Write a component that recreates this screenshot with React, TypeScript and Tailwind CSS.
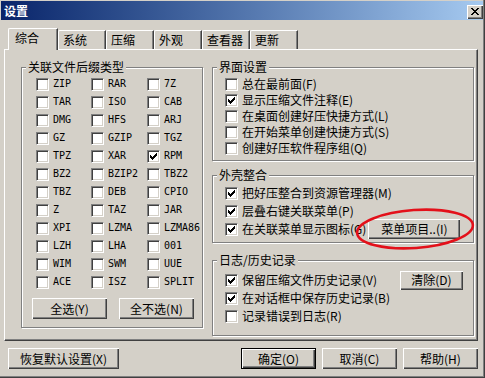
import React from "react";

const FONT = '"Noto Sans CJK SC", "Noto Sans", sans-serif';
const MONO = '"DejaVu Sans Mono", "Liberation Mono", monospace';

const CHECK: [number, number][] = [
  [6, 0], [5, 1], [6, 1], [0, 2], [4, 2], [5, 2], [6, 2], [0, 3], [1, 3], [3, 3], [4, 3], [5, 3],
  [0, 4], [1, 4], [2, 4], [3, 4], [4, 4], [1, 5], [2, 5], [3, 5], [2, 6],
];

const XMARK: [number, number][] = [];
[
  "XX....XX",
  ".XX..XX.",
  "..XXXX..",
  "...XX...",
  "..XXXX..",
  ".XX..XX.",
  "XX....XX",
].forEach((row, y) => row.split("").forEach((c, x) => c === "X" && XMARK.push([x, y])));

function Pixels({ px, w, h, className }: { px: [number, number][]; w: number; h: number; className?: string }) {
  return (
    <svg width={w} height={h} viewBox={`0 0 ${w} ${h}`} shapeRendering="crispEdges" className={className}>
      {px.map(([x, y]) => (
        <rect key={`${x}-${y}`} x={x} y={y} width="1" height="1" fill="#000" />
      ))}
    </svg>
  );
}

function Box({ checked }: { checked?: boolean }) {
  return (
    <span className="relative block w-[13px] h-[13px] shrink-0 bg-white border border-t-[#808080] border-l-[#808080] border-r-white border-b-white shadow-[inset_1px_1px_0_#404040,inset_-1px_-1px_0_#d4d0c8]">
      {checked && <Pixels px={CHECK} w={7} h={7} className="absolute left-[2px] top-[2px]" />}
    </span>
  );
}

function Btn({ children, className = "", def }: { children: React.ReactNode; className?: string; def?: boolean }) {
  return (
    <div
      className={`flex items-center justify-center shrink-0 bg-[#d4d0c8] text-[12px] leading-[14px] text-black whitespace-nowrap ${
        def
          ? "border border-black shadow-[inset_1px_1px_0_#fff,inset_-1px_-1px_0_#404040,inset_-2px_-2px_0_#808080]"
          : "shadow-[inset_1px_1px_0_#fff,inset_-1px_-1px_0_#404040,inset_-2px_-2px_0_#808080]"
      } ${className}`}
    >
      {children}
    </div>
  );
}

function Group({ title, className = "", children }: { title: string; className?: string; children: React.ReactNode }) {
  return (
    <div className={`relative shrink-0 border border-[#808080] shadow-[1px_1px_0_#fff,inset_1px_1px_0_#fff] ${className}`}>
      <span className="absolute left-[4px] -top-[8px] bg-[#d4d0c8] px-[2px] leading-[14px] text-[12px] whitespace-nowrap">
        {title}
      </span>
      {children}
    </div>
  );
}

function Row({ label, checked, className = "" }: { label: string; checked?: boolean; className?: string }) {
  return (
    <div className={`flex items-center gap-[4px] ${className}`}>
      <Box checked={checked} />
      <span className="text-[12px] leading-[14px] whitespace-nowrap">{label}</span>
    </div>
  );
}

const TYPES = [
  "ZIP", "RAR", "7Z",
  "TAR", "ISO", "CAB",
  "DMG", "HFS", "ARJ",
  "GZ", "GZIP", "TGZ",
  "TPZ", "XAR", "RPM",
  "BZ2", "BZIP2", "TBZ2",
  "TBZ", "DEB", "CPIO",
  "Z", "TAZ", "JAR",
  "XPI", "LZMA", "LZMA86",
  "LZH", "LHA", "001",
  "WIM", "SWM", "UUE",
  "ACE", "ISZ", "SPLIT",
];

const TABS = ["系统", "压缩", "外观", "查看器", "更新"];

export default function App() {
  return (
    <div className="relative w-[485px] h-[378px] bg-[#d4d0c8] text-black overflow-hidden" style={{ fontFamily: FONT }}>
      <div className="flex flex-col h-full pt-[1px] pl-[1px] pr-[2px] pb-[2px] shadow-[inset_-1px_-1px_0_#404040,inset_-2px_-2px_0_#808080]">
        {/* title bar */}
        <div className="flex items-start justify-between h-[19px] shrink-0 bg-gradient-to-r from-[#0a246a] to-[#a6caf0] pl-[3px]">
          <span className="mt-[2px] text-[12px] leading-[15px] font-bold text-white">设置</span>
          <div className="relative mt-[4px] w-[16px] h-[14px] bg-[#d4d0c8] shadow-[inset_1px_1px_0_#fff,inset_-1px_-1px_0_#404040,inset_-2px_-2px_0_#808080]">
            <Pixels px={XMARK} w={8} h={7} className="absolute left-[4px] top-[3px]" />
          </div>
        </div>

        {/* tabs */}
        <div className="relative z-10 mt-[8px] flex items-end h-[22px] pl-[7px] shrink-0">
          <div className="w-[50px] h-[22px] bg-[#d4d0c8] border-l border-t border-r border-l-white border-t-white border-r-[#404040] rounded-tl-[2px] shadow-[inset_-1px_0_0_#808080] pl-[6px] pt-[2px] text-[12px] leading-[14px]">
            综合
          </div>
          {TABS.map((t) => (
            <div
              key={t}
              className="w-[48px] h-[19px] mb-[1px] bg-[#d4d0c8] border-l border-t border-r border-l-white border-t-white border-r-[#404040] rounded-tl-[2px] shadow-[inset_-1px_0_0_#808080] pl-[4px] pt-[2px] text-[12px] leading-[14px] whitespace-nowrap"
            >
              {t}
            </div>
          ))}
        </div>

        {/* panel */}
        <div className="-mt-[1px] ml-[3px] w-[474px] h-[292px] shrink-0 border border-t-white border-l-white border-r-[#404040] border-b-[#404040] shadow-[inset_-1px_-1px_0_#808080] pl-[16px] pt-[17px] flex items-start gap-[9px]">
          <Group title="关联文件后缀类型" className="w-[182px] h-[261px]">
            <div className="grid grid-cols-[55px_56px_1fr] pl-[14px] pt-[7px]">
              {TYPES.map((t) => (
                <div key={t} className="flex items-center gap-[4px] h-[18px]">
                  <Box checked={t === "RPM"} />
                  <span className="text-[10px] leading-[12px] whitespace-nowrap" style={{ fontFamily: MONO }}>
                    {t}
                  </span>
                </div>
              ))}
            </div>
            <div className="flex gap-[12px] pl-[10px] mt-[7px]">
              <Btn className="w-[75px] h-[21px]">全选(Y)</Btn>
              <Btn className="w-[75px] h-[21px]">全不选(N)</Btn>
            </div>
          </Group>

          <div className="flex flex-col w-[262px]">
            <Group title="界面设置" className="w-[262px] h-[94px]">
              <div className="flex flex-col pl-[12px] pt-[8px]">
                <Row className="h-[16px]" label="总在最前面(F)" />
                <Row className="h-[16px]" label="显示压缩文件注释(E)" checked />
                <Row className="h-[16px]" label="在桌面创建好压快捷方式(L)" />
                <Row className="h-[16px]" label="在开始菜单创建快捷方式(S)" />
                <Row className="h-[16px]" label="创建好压软件程序组(Q)" />
              </div>
            </Group>

            <Group title="外壳整合" className="mt-[14px] w-[262px] h-[68px]">
              <div className="flex flex-col pl-[12px] pt-[8px]">
                <Row className="h-[18px]" label="把好压整合到资源管理器(M)" checked />
                <Row className="h-[18px]" label="层叠右键关联菜单(P)" checked />
                <div className="flex items-center h-[18px]">
                  <Box checked />
                  <span className="ml-[4px] text-[12px] leading-[14px] whitespace-nowrap">在关联菜单显示图标(G)</span>
                  <Btn className="ml-[2px] w-[92px] h-[20px]">菜单项目..(I)</Btn>
                </div>
              </div>
            </Group>

            <Group title="日志/历史记录" className="mt-[17px] w-[262px] h-[76px]">
              <div className="flex flex-col pl-[12px] pr-[10px] pt-[10px]">
                <div className="flex items-center h-[18px]">
                  <Row label="保留压缩文件历史记录(V)" checked />
                  <Btn className="ml-auto w-[63px] h-[19px]">清除(D)</Btn>
                </div>
                <Row className="h-[18px]" label="在对话框中保存历史记录(B)" checked />
                <Row className="h-[18px]" label="记录错误到日志(R)" />
              </div>
            </Group>
          </div>
        </div>

        {/* bottom buttons */}
        <div className="mt-[7px] flex items-start pl-[7px] pr-[5px]">
          <Btn className="w-[111px] h-[21px]">恢复默认设置(X)</Btn>
          <div className="ml-auto flex gap-[6px]">
            <Btn def className="w-[75px] h-[21px]">确定(O)</Btn>
            <Btn className="w-[75px] h-[21px]">取消(C)</Btn>
            <Btn className="w-[75px] h-[21px]">帮助(H)</Btn>
          </div>
        </div>
      </div>

      {/* red annotation ellipse */}
      <svg className="absolute left-[350px] top-[204px] pointer-events-none" width="130" height="50" viewBox="0 0 130 50">
        <ellipse cx="65" cy="25" rx="58" ry="19" fill="none" stroke="#e3101a" strokeWidth="2.6" transform="rotate(-4 65 25)" />
      </svg>
    </div>
  );
}
